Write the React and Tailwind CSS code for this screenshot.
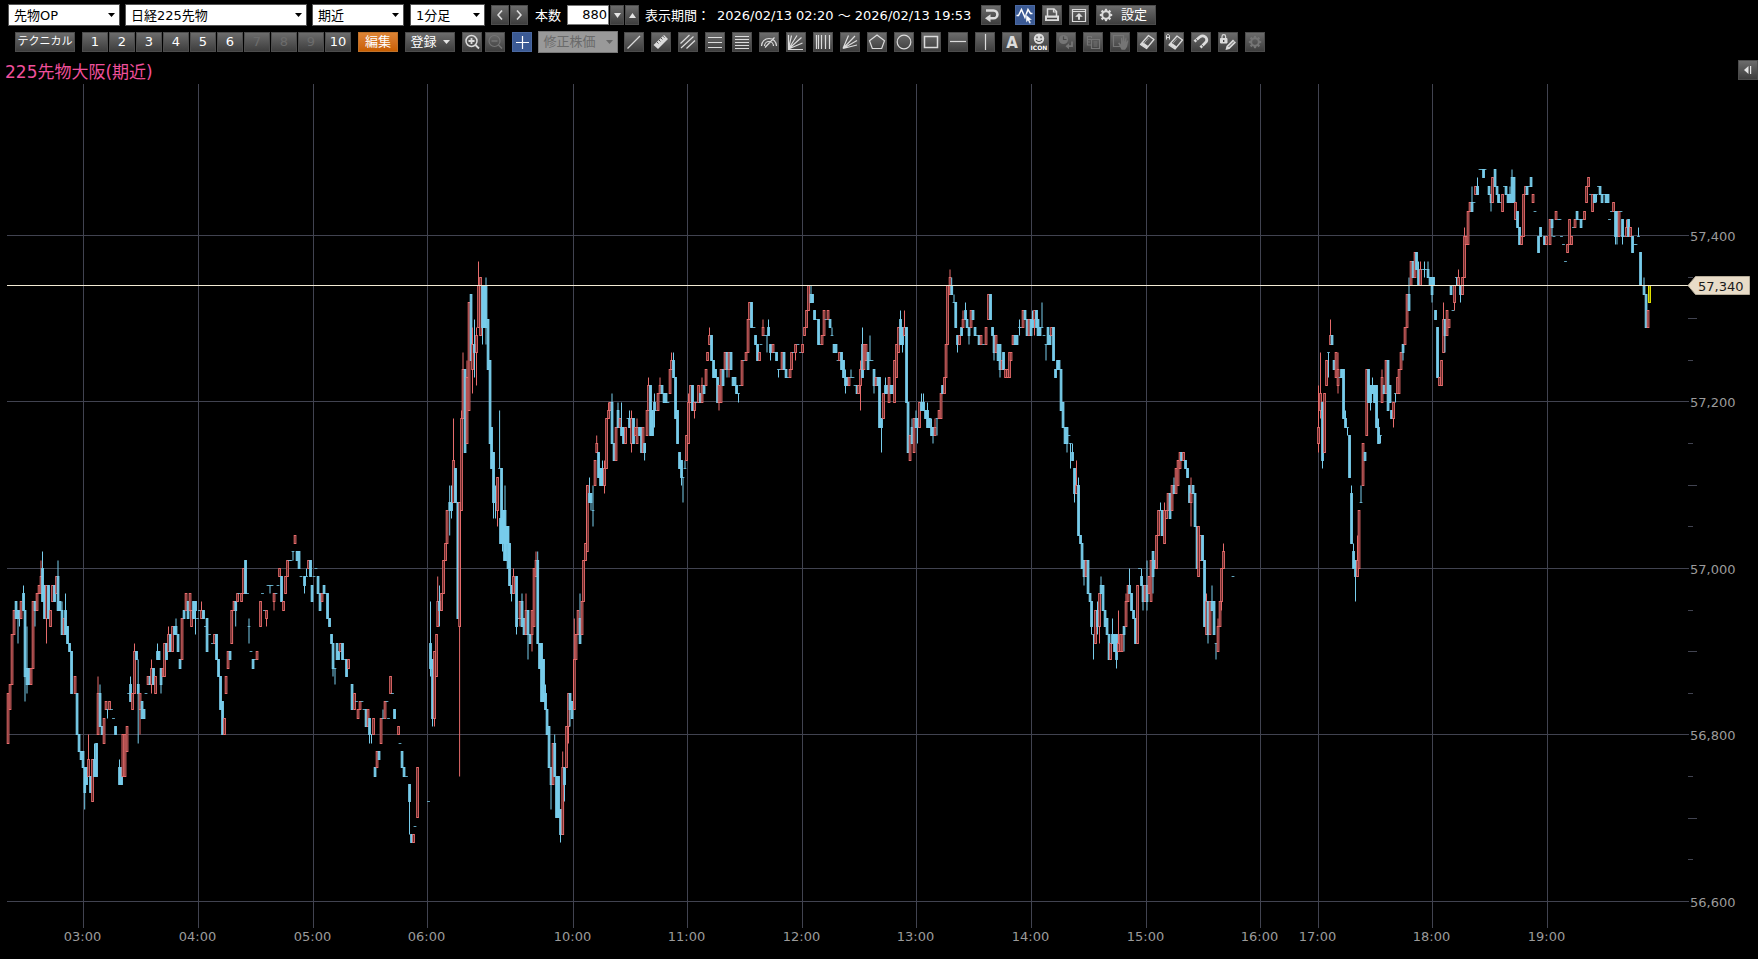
import React from "react";

/* Candles: "x open close [hN] [lN]"; prices are steps of 10 yen relative to 57,000. */
const CANDLES = `
8 -21 -15,10 -17 -14,12 -14 -8,14 -8 -5,16 -4 -6,18 -5 -6 l-9,19.5 -5 -6 l-7,21 -6 -4,23.5 -3 -5 h-2,25 -5 -13 l-16,27 -12 -14 h-7 l-15,29 -12 -14,31 -14 -12,33 -12 -4,35 -4 -5 l-7,37 -5 -3,39 -3 -2,41 -3 -1 h1,42.5 0 -4 h2,44.5 -2 -6,46.5 -6 -2 l-9,48.5 -2 -6,50.5 -7 -5,52.5 -4 -2,54.5 -2 -4,56.5 -3 -1,58 -1 -5 h1,60 -4 -5,62 -5 -8 h-4,64 -8 -6,65.5 -5 -8 h-3,67.5 -7 -9,69.5 -9 -10,71.5 -10 -15,75 -15 -13,77 -15 -20,79 -20 -22,81 -22 -23,83 -22 -24,84.7 -24 -27 l-29,86.5 -24 -26,88.5 -25 -23 h-20,90.5 -25 -27,92.5 -28 -23,94.5 -23 -25 h-21,96.5 -21 -25,98 -20 -15 h-13,100 -15 -19 h-14,102 -19 -20,104 -21 -18,106 -17 -16,107.5 -17 -17 l-18,109.5 -17 -16,111.5 -17 -17,113.5 -18 -18,115.5 -19 -20,119.5 -24 -26 h-23,121.5 -24 -26,122.8 -25 -20,125 -25 -20,127 -22 -19,128.7 -15 -15,130.5 -14 -16 h-13,132.5 -17 -15,134.5 -15 -10 h-9,136.5 -10 -11,138.2 -14 -15 h-11 l-21,140 -17 -15 l-20,142 -16 -18,144 -17 -18,146 -15 -15,148 -14 -13,150 -13 -14,151.5 -14 -12 h-11 l-15,153.5 -12 -14,155.5 -15 -13,157.5 -10 -11 h-9,159 -10 -11,161 -12 -14 l-15,163 -13 -12,164.5 -13 -9,166.5 -9 -11,168.5 -10 -8 h-7,170.5 -8 -10,172.5 -10 -7,174.5 -7 -8,176 -7 -8 h-6,178 -8 -10,180 -11 -12,182 -11 -6,184 -5 -6,186 -5 -3,188 -4 -6,190 -5 -3,191.5 -7 -5,193.5 -4 -6,195.5 -4 -5 l-8,197.5 -6 -6,199.5 -5 -5,201.5 -6 -5 h-4,203.5 -5 -6,205.5 -7 -7,207 -6 -10,209.5 -8 -8,212.5 -9 -9,214.5 -9 -8,216.5 -8 -11,218.5 -11 -13,220.5 -13 -17,222.5 -16 -20,224.5 -20 -18,226 -15 -13,228 -12 -10,230 -10 -11,231.7 -9 -5,234 -5 -4,235.7 -4 -5 l-7,237.5 -4 -3,239 -3 -3,241.5 -4 -3,243.5 -3 0,245.5 1 -3,247.5 -3 -3,249 -7 -7 h-6 l-9,251 -10 -10,253 -11 -12,255 -11 -11,257 -11 -10,260.5 -7 -4,262.5 -3 -3,264.5 -5 -5,266.5 -6 -5 l-7,268 -2 -2,270 -2 -2 l-3,272 -2 -2,274 -4 -3 l-5,276 -3 -3,278 -2 -2,279.5 -1 0,281.5 -1 -4,283.5 -5 -4,285.5 -3 -1,287.5 -1 1,289.5 1 1,291 1 1,293 2 2 l1,295 3 4,297 2 1,299 2 0,301 -1 -1,304.5 -1 -2 l-3,306.5 -1 -1 h0,308.5 0 1,310.5 1 -1,312 -2 -4,314 -1 -1,316 0 0,318 -1 -3,320 -3 -5,322 -4 -3,324 -2 -3,326 -3 -3,327.5 -3 -6,329.5 -6 -7,331.5 -8 -9,333 -9 -12 l-13,335 -12 -12 l-14,337 -9 -11,338.5 -10 -11,340.5 -10 -9,342.5 -9 -11,344.5 -11 -11,346.5 -11 -13,348.5 -12 -11,352 -14 -17,354.5 -17 -15,356.5 -16 -16,358 -18 -17,360 -17 -16,362 -16 -16,364 -17 -17,366 -17 -19,368 -19 -17,369.5 -18 -20 l-21,371.5 -20 -20 l-21,373.5 -20 -18,375 -24 -25,377 -24 -22,379 -22 -23,381 -21 -18,383 -18 -18 h-17,385 -18 -16,387 -16 -16,388.5 -18 -18,390.5 -15 -13,392.5 -15 -15,394.5 -17 -18,398.5 -20 -19,400 -21 -21,402 -22 -24,404 -24 -25,406.5 -25 -25,409.5 -26 -28 l-32,411.5 -32 -33,413.5 -33 -32,415 -31 -31,417.5 -30 -24,428.5 -28 -28,
430.5 -9 -12 h-4 l-13,432.5 -11 -18 l-19,434.5 -18 -10 l-19,436.5 -13 -8,437.7 -7 -4 h-1,439.5 -4 -5 h-2 l-7,441.5 -5 -3,443.5 -3 1,445.5 1 3,447 3 7,449.7 8 7 h10 l4,451.5 8 7 h10 l6,453.5 8 13 h18,455.5 12 8,457.8 8 -6,459.6 -7 8 l-25,461.5 7 18 h19,463 18 24 h26,465 24 14,467 15 23 h25,469 19 32,471 33 25,472.5 24 27 h29 l21,474.5 27 26 h30 l23,476.5 26 28 h29 l22,478.5 29 34 h37,480.5 28 35,482.5 34 29 l27,484.5 34 29,486 34 29 h35 l27,488 30 24,490 25 15,491.5 17 12,493.5 14 8 l6,495.5 8 8 h10 l6,497.5 7 11 l5,499.6 12 12 h19,501.5 12 3,503.5 7 3,505 7 3 h10,507.5 5 3,500.5 6 3,502.5 6 3 l2,504.5 5 1,506 5 1 h5,508 5 0 h5 l0,509.5 3 -2,511.5 -2 -3 l-4,513.5 -3 -1 h0,516.5 -1 -7 l-8,518.5 -6 -6,520 -6 -4 l-7,522 -4 -7 h-3,524 -6 -8,526 -8 -5 h-3,528 -5 -8 l-11,530 -8 -9,532 -8 -5 l-10,534 -7 0,536 -1 1 h2,537.7 1 -9 h2,539.5 -9 -12,541.5 -9 -16,543.5 -11 -16,545.5 -15 -17 h-14,547 -17 -20,549 -19 -24,551 -24 -26 l-29,553 -26 -21,554.7 -21 -25 h-20,556.5 -25 -30,558.5 -25 -30,560.5 -29 -32 l-33,562.7 -32 -24 h-22,564.5 -24 -26 l-28,566.5 -24 -19,568.5 -19 -15 l-21,570 -15 -17 l-19,572 -16 -18,574.3 -17 -11 h-6,576 -11 -8,578 -8 -5,580 -6 -9 h-3,582 -8 -4,583.5 -4 1,585.5 1 3,587.3 2 10,589.5 9 8 h11,591 9 8 l7,593 7 7 h10 l5,595 10 13,596.7 14 15 h16,598.5 14 11,600.5 12 10,602.5 12 10 h13,604.5 10 12 h13 l9,606.5 12 18,608.5 18 19 h20,610 19 20,612 20 15 h21,614 15 13,616 13 17,618 19 17 h20,620 17 18,621.5 17 16 h20,623.5 17 15,625.5 15 17,628 18 18,629.5 18 17 h19,631.5 15 18 h19 l14,633.5 18 15,635.5 16 17,637 15 17 h18,639.5 17 16,641.5 17 14,643 14 17,644.6 15 14 l13,647 16 19,648.5 19 22 h23,650.5 22 16,652.5 19 16,654.5 20 19 h21 l17,656.5 19 19,658 19 21,660 21 22 h23,662 22 21,664 21 20,666 21 20,668 20 20,670 21 24,671.5 24 25 h26,673.5 25 23 h26,675.5 23 18,677.5 19 15,679.5 14 12,681.5 13 11 l10,683 11 11 l8,685 12 12 h13,686.5 13 16,688.5 15 20 h21,690.5 20 22,692.5 22 19,694.5 19 20 l18,696.5 20 20,698.5 20 22,700.5 21 20,702 20 22 h23,704 22 21,706 22 24,707.5 25 26,709.5 27 28 h29,711.5 28 25,713.5 25 23,715.5 24 23,717.5 23 20,719 20 22 l19,721 20 24,723 24 22,725 24 26,727 26 24 l23,729 24 26 l23,731 26 24,733 23 22,735 23 22,736.5 22 21,738.5 21 21 l20,740 22 22,742 22 25,744 25 25,746 25 26,748 26 30,749.5 30 32,751.5 32 29,754 29 29,755.5 28 27,757.5 27 25,759.5 25 26,761 27 27,763 28 29 h30,765 28 28,767 28 28 l26,768.5 29 28 h30,770.5 27 26 l25,773 26 27,774.5 26 26,776.5 26 25,778.5 24 24 l23,780.5 24 24,782 24 26,784 26 24,786 24 23,788 23 23,790 23 24,791.5 24 26,793.5 26 26,795.5 26 27 l25,798 27 27,800.5 26 26,802.5 26 27,804.5 28 29,806.5 29 31,808.5 31 34,811 33 32 h34,812.5 33 32,814.5 31 30,816.5 30 30,818.5 30 27,820.5 27 27,822 27 28,824 28 31,826 30 30,828 30 31,830 30 29,832 28 28 h29,834 27 26,836 27 26,838 25 25,839.5 25 26,841.5 26 24,843.5 25 23,845.5 23 22 h24 l21,847.5 23 22,849 22 23,851 23 23 h24,853 23 23,855 22 22,857 22 21,858.5 21 22,860.5 22 24 h25 l19,862.5 27 23 h29,864 24 27,866 25 27,868 26 24,870 25 25 h28,872 25 25,874 24 22 l21,876 22 23,878 23 22,879.5 23 17,881.5 18 17 l14,883.5 18 21,885.5 22 21 h23,887.5 22 21,889 20 23,891 22 21,893 22 21,894.5 20 25,896.5 23 27,898.5 26 29,900.5 30 27 h31,902.5 29 27 l26,904.5 28 29 h31,906.5 29 20,908 20 14,910 13 16,912 17 15 h18,914 14 18,916 18 17 h19,917.5 18 17 l15,919.5 17 20,921.5 20 19 h21,923.5 20 19 h21,925.5 19 18,927.5 19 17 h20,929.5 18 17,931.5 17 16 h18,933 17 16 l15,935 16 17 h18,937 18 18 l16,939 18 19,941 18 21,942.5 22 21,944.5 21 23,946 23 27,947.5 27 34,950 33 35 h36,951.7 34 33 h35,954 32 32 h33,955.7 32 29,957.5 28 27 l26,959.5 27 28,961.5 29 28,963 29 30 h31,965.5 31 30 h32,967 30 29,969 29 28 l27,971 29 31,973 31 30,975 29 28,977 28 28,979 28 27,981 27 28,983.5 27 27,986 27 29,988.5 30 33,990.5 33 30,992.5 29 28,994 28 26 l25,996 26 28,998 27 25,1000 27 24 l23,1002 24 25,1003.5 26 24,1005.5 23 24,1007.5 23 24,1009.5 23 26,1011 25 26,1013 27 28,1015 28 27,1017 28 27,1019.5 29 29 h30 l28,1021.5 29 29,1023 29 31,1025 31 30,1027 30 28,1029 28 30,1031 30 28,1032.5 30 29 h31,1034.5 30 31 l28,1036.5 31 29,1038 30 28,1040 29 28,1042 29 29 h32,1044 28 28,1046 27 27 l25,1048 29 27,1050 28 27,1051.5 28 29,1053.5 29 25,1055.5 24 23,1057.5 25 24,1059 25 24,1061 24 19,1063 20 17,1065 17 15,1067 17 15 l14,1069 16 16,1070.5 15 15 l12,1072.5 14 13 h15,1074.5 12 9 l8,1076.5 9 10 h13,1078.5 10 4 h11,
1080.5 4 3,1082 3 0,1084 1 -1 l-2,1086 -1 1,1088 1 -3,1090 -3 -4,1091.5 -4 -7 l-8,1093.5 -8 -8 l-11,1095.5 -9 -5,1097.5 -5 -7 h-4 l-8,1099.5 -7 -3 l-9,1101 -2 -3 h-1,1103 -2 -5,1105 -5 -7,1107 -6 -8,1109 -8 -11,1110.5 -11 -9,1112.5 -8 -9 h-6,1114.5 -8 -10,1116.5 -8 -11 l-12,1118.5 -10 -9 h-5,1120.5 -10 -8,1122 -10 -8,1124 -7 -8 l-10,1126 -7 -4 h-3,1128 -4 -2,1129.5 -2 -3 h0,1131.5 -3 -5,1133.5 -5 -6,1135.5 -6 -9,1137.5 -9 -2,1139.5 0 0,1141.5 -1 -2 h0,1143 -2 -4 l-5,1145 -4 -2,1147 -2 -4 h1 l-5,1149 -3 -1,1151 -4 1,1153 2 -1 l-3,1155 1 0,1156.5 0 4,1158.5 4 7,1160.5 7 7 h8,1162 7 4,1164.5 3 7 h8,1166.5 6 7,1168 7 9,1170 9 6,1172 7 10,1174 10 9 h11,1176 9 12,1178 10 13,1180 12 14,1181.5 14 13,1183.5 13 14,1185.5 13 12,1187.5 12 11,1189.5 10 8,1191 8 9 h11 l5,1193 10 9,1195 9 5,1197 5 0,1198.5 -1 5,1200.5 1 4,1202.5 4 1,1204.5 1 -7,1206.5 -8 -4 h-3,1208 -4 -8 l-9,1210 -8 -4,1212 -4 -5 h-2,1214 -4 -8,1216 -9 -9 l-11,1218 -10 -7 h-6,1220 -7 -4,1221.5 -4 0 l-5,1223.5 0 2 h3,1233 -1 -1,
1318.5 15 17 h22 l14,1320.5 19 21 h26 l18,1322.5 20 13 l12,1324.5 14 21,1326.5 22 25,1328.5 26 26 l23,1330.5 27 28 h30,1332 28 27,1334 25 24,1336 23 26,1338 22 24 h26 l21,1340 23 23,1341.5 24 23,1343.5 24 18,1345.5 18 17 h19,1347.5 17 17 l16,1349.5 16 11,1351.5 9 3 h10,1353.5 2 0 h3,1355.5 1 -1 l-4,1357.5 -1 1 h4,1359 0 7,1361 8 8 h10,1363 10 15,1365 14 13,1366.7 16 24,1368.5 24 20,1370.5 22 20 l19,1372.5 22 21 h23,1374.5 22 20,1376.5 22 17,1378.5 17 15 h18,1380.5 16 16 l15,1382 20 23 h24,1384 22 21,1386 21 25,1388 25 19,1390 22 20,1391.5 19 18,1393.5 18 20 l17,1395.5 21 21 l20,1397.5 21 23,1399 21 24,1401 24 26,1403 27 26 l25,1405 27 29,1407 29 33,1409 33 31 h35,1411 34 37,1413 37 35,1415 35 38,1416.5 38 36,1418.5 36 34 h37,1420.5 34 36 h37,1422.5 36 36,1424.5 36 36 h37 l35,1426.5 36 36,1428 36 35 h37,1430 35 34,1432 35 33 l32,1433.5 35 34,1435.5 31 30,1437.5 29 23,1439.5 22 23,1441.5 22 25,1443.5 26 30 h32,1445 30 28 l26,1447 28 31,1449 29 30,1451 34 33,1453 31 31,1454.5 32 34 l31,1456.5 35 35 l34,1458.5 34 35 h36,1460.5 34 33 l32,1462.5 33 35,1464.5 35 40 h41,1466 39 40,1468 39 43,1470 43 44,1472 44 43 h46,1474 44 44,1475.5 45 46,1477.5 46 45 h47,1480 48 48,1482 48 48,1483.5 48 47,1485 48 48,1489 46 45,1491 45 44 l43,1492.5 44 47,1495 48 46,1497 46 45,1498.5 45 44,1500.5 44 44,1502.5 43 45,1504.5 46 46,1506 46 45,1508 45 44,1510 45 44 h46,1512 47 44 h48,1514 47 44,1515.5 42 44,1517.5 43 41,1519.5 41 39,1521.5 39 40,1523.5 40 45,1525.5 45 46,1527 46 45,1529 46 46,1531 47 46,1533 44 45,1535 43 43,1538.5 40 38,1540.5 41 40,1544.5 40 39,1546.5 39 40,1550 39 42,1552 42 41 l40,1554 40 40,1556 42 43,1558.5 42 42,1560 42 42,1561.5 40 40,1563.5 39 39,1565.5 37 37,1567.5 38 39,1569.5 39 42,1571.5 39 40,1573.5 41 41,1575 41 42,1577 43 42,1579 42 42,1581 42 41,1583 42 42,1584.5 42 43,1586.5 44 46,1588.5 46 47,1590.5 45 45,1592.5 43 45,1594.5 45 44,1596.5 45 45 l44,1598.5 46 46,1600 46 45,1602 45 44,1604 45 45,1606 45 44,1608 45 44,1609.5 42 42,1611.5 43 43,1613.5 43 44,1615.5 43 40 l39,1617 43 40 l39,1619 40 43,1621 43 43,1622.5 42 40 l39,1625 40 40,1626.5 40 41 h42,1628.5 42 40,1630.5 40 41,1632.5 40 38,1634.5 39 39,1636 39 39,1638.5 40 40 h41,1640.5 38 34,1644 34 33 h35,1646 33 29,1648 29 31
`
  .trim()
  .split(",")
  .map((row) => {
    const [x, o, c, ...rest] = row.trim().split(/\s+/);
    const candle = { x: +x, o: +o, c: +c };
    candle.h = Math.max(candle.o, candle.c);
    candle.l = Math.min(candle.o, candle.c);
    rest.forEach((t) => (candle[t[0]] = +t.slice(1)));
    return candle;
  });

const HOURS = [
  [83.5, "03:00"], [198.5, "04:00"], [313.5, "05:00"], [427.5, "06:00"], [573.5, "10:00"],
  [687.5, "11:00"], [802.5, "12:00"], [916.5, "13:00"], [1031.5, "14:00"], [1146.5, "15:00"],
  [1260.5, "16:00"], [1318.5, "17:00"], [1432.5, "18:00"], [1547.5, "19:00"],
];
const PRICES = [[235.5, "57,400"], [401.5, "57,200"], [568.5, "57,000"], [734.5, "56,800"], [901.5, "56,600"]];
const TICKS = [277.5, 318.5, 360.5, 443.5, 485.5, 526.5, 610.5, 651.5, 693.5, 776.5, 818.5, 859.5];
const LONG_TICKS = [318.5, 485.5, 651.5, 818.5];

const yOf = (level) => Math.round(568 - level * 8.31) + 0.5;

function Candle({ x, o, c, h, l }) {
  const top = yOf(Math.max(o, c));
  const bottom = yOf(Math.min(o, c));
  const up = c > o;
  const color = up ? "#e66b6b" : "#78cdec";
  return (
    <g stroke={color} strokeWidth="1">
      {h > Math.max(o, c) && <path d={`M${x} ${yOf(h)}V${top}`} />}
      {l < Math.min(o, c) && <path d={`M${x} ${bottom}V${yOf(l)}`} />}
      {o === c ? (
        <path d={`M${x - 1.4} ${top}h2.8`} opacity="0.8" />
      ) : (
        <rect x={x - 0.8} y={top} width="1.7" height={bottom - top} fill={up ? "#3a1616" : color} />
      )}
    </g>
  );
}

function Chart() {
  return (
    <svg viewBox="0 84 1758 875" className="block h-auto w-full" role="img" aria-label="225先物大阪(期近) 1分足">
      <g stroke="#414350" fill="none">
        {HOURS.map(([x]) => <path key={x} d={`M${x} 84V928`} />)}
        {PRICES.map(([y]) => <path key={y} d={`M7 ${y}H1689`} />)}
        {TICKS.map((y) => <path key={y} d={`M1688 ${y}h${LONG_TICKS.includes(y) ? 9 : 5}`} />)}
      </g>
      {CANDLES.map((c) => <Candle key={c.x} {...c} />)}
      <rect x="1648.5" y={yOf(34)} width="2" height={yOf(32) - yOf(34)} fill="#8a8a00" stroke="#e0e000" />
      <path d="M7 285.5H1690" stroke="#f2ead4" />
      <path d="M1688 285.5L1695.5 276.5H1749.5V294.5H1695.5Z" fill="#e8dcc8" stroke="#b5ab98" />
      <g className="text-[13px]" fill="#9b9b9b">
        {HOURS.map(([x, t]) => <text key={t} x={x - 1} y="941" textAnchor="middle">{t}</text>)}
        {PRICES.map(([y, t]) => <text key={t} x="1690" y={y + 5.5}>{t}</text>)}
        <text x="1698" y="291" fill="#1a1a1a">57,340</text>
      </g>
    </svg>
  );
}

/* Every button look carries its own face, border and text colour. */
const LOOKS = {
  normal: "h-5 border-[#4c4c4c] bg-linear-to-b from-[#6c6c6c] to-[#3e3e3e] text-white disabled:text-[#6c6c6c]",
  active: "h-5 border-[#4a68a0] bg-[#3b5a94] text-white",
  edit: "h-5 border-[#c0722a] bg-linear-to-b from-[#dd8434] to-[#c95f00] text-white",
  flat: "h-[22px] border-[#777] bg-[#999] text-[#6a6a6a]",
};

function Btn({ className = "w-5", look = "normal", label, children, ...rest }) {
  return (
    <button type="button" aria-label={label} className={`flex shrink-0 items-center justify-center border ${LOOKS[look]} ${className}`} {...rest}>
      {children}
    </button>
  );
}

function Drop({ label, value, className }) {
  return (
    <div className={`relative h-[22px] shrink-0 ${className}`}>
      <select aria-label={label} defaultValue={value} className="h-full w-full appearance-none border border-[#555] bg-white pl-[5px] text-[13px] leading-none text-black">
        <option>{value}</option>
      </select>
      <svg viewBox="0 0 7 4" className="pointer-events-none absolute right-[5px] top-[9px] h-1 w-[7px]"><path d="M0 0h7L3.5 4z" fill="#000" /></svg>
    </div>
  );
}

function Icon({ children, dim }) {
  return (
    <svg viewBox="0 0 20 20" className="-m-px h-5 w-5 shrink-0" fill="none" stroke={dim ? "#757575" : "#dcdcdc"} strokeWidth="1.2">
      {children}
    </svg>
  );
}

function Gear({ dim }) {
  return (
    <Icon dim={dim}>
      <circle cx="10" cy="10" r="3.8" strokeWidth="2" />
      <g strokeWidth="2.2">
        {[0, 45, 90, 135, 180, 225, 270, 315].map((a) => <path key={a} d="M10 3.8V6" transform={`rotate(${a} 10 10)`} />)}
      </g>
    </Icon>
  );
}

const eraser = (
  <>
    <path d="M11.5 3.5L17 7.500 9.500 16.500 3.500 12.500Z" strokeWidth="1.300" strokeLinejoin="round" />
    <path d="M3.800 12.300l5.700 4 1.800-2.200-5.600-4z" fill="#dcdcdc" stroke="none" />
    <path d="M11.500 6l-4.500 5.300" stroke="#a0a0a0" strokeWidth="1" />
  </>
);

const TOOLS = [
  ["直線", <path d="M3.5 16.5L16 4" />],
  ["目盛", <><path d="M2.5 13L13 3l4 4L7 17z" fill="#dcdcdc" stroke="none" /><path d="M6 10l1.500 1.500M8 8l1.500 1.500M10 6l1.500 1.500M12 4.200l1.500 1.500" stroke="#555" strokeWidth="1" /></>],
  ["平行線", <path d="M2.5 11.5L11.5 3M3 16L15.5 4.5M8.5 16.5L17 8.5" />],
  ["三本線", <path d="M3 5.5h14M3 10.5h14M3 15.5h14" />],
  ["五本線", <path d="M3 4.5h14M3 7.5h14M3 10.5h14M3 13.5h14M3 16.5h14" />],
  ["円弧", <path d="M2.5 14a7.5 7.5 0 0 1 15 0M5.5 14a4.500 4.500 0 0 1 9 0M6 15.500L15.500 5.500" />],
  ["ファン", <path d="M2.5 3v14.5H17M2.5 17L5.5 3.5M2.5 17L11 3.5M2.5 17L15.5 5.5M2.5 17L16.5 11" />],
  ["縦線群", <path d="M3.5 3v14M5.5 3v14M8.5 3v14M12.5 3v14M16.5 3v14" />],
  ["スピードライン", <path d="M3 16.5L8.5 3.5M3 16.5L15 4M3 16.5L17 8.5M3 16.5L17 13" />],
  ["五角形", <path d="M10 3L17.5 8.8 14.7 16.5H5.3L2.5 8.8Z" />],
  ["円", <circle cx="10" cy="10" r="6.8" />],
  ["四角形", <path d="M3.5 4.5h13v11h-13z" strokeWidth="1.5" />],
  ["水平線", <path d="M2 9.5h16" />],
  ["垂直線", <path d="M10.5 2v16" />],
  ["文字", <text x="10" y="15.5" textAnchor="middle" fontSize="15" fontWeight="700" fill="#dcdcdc" stroke="none">A</text>],
  ["アイコン", <><circle cx="10" cy="6.7" r="5.2" fill="#dcdcdc" stroke="none" /><path d="M8 4.5v1.8M12 4.5v1.8M7 8c1.5 2 4.5 2 6 0" stroke="#444" /><text x="10" y="18" textAnchor="middle" fontSize="6" fontWeight="700" fill="#fff" stroke="none">ICON</text></>],
  ["履歴", <><circle cx="7.5" cy="7.5" r="4.6" fill="#757575" stroke="none" /><path d="M7.5 4.5v3h3" stroke="#4a4a4a" /><path d="M16 9.5v4.7h-4" strokeWidth="1.8" /><path d="M9.5 14.2l3.5-3v6z" fill="#757575" stroke="none" /></>, true],
  ["複製", <><path d="M8.5 6V4.500H4.500v8.500H8" /><path d="M8.500 7.500h8v9h-8zM10.500 10h4M10.500 12h4M10.500 14h4M5 7.500h3M5 10h2" /></>, true],
  ["移動", <><path d="M10 14.500H3.500v-11h10V6" /><path d="M8 11l1.500-.5 1.500 2V6l1.200-.5.8 4V4.500h1.200l.5 5 .8-4 1 .3v4.500l1-2 .8.500-1.200 6-2 3h-3.500z" fill="#757575" stroke="none" /></>, true],
  ["消去", eraser],
  ["全消去", <><g transform="translate(1.500 .5)">{eraser}</g><path d="M2.500 7.500V3.500l1-1h1l1 1v4M2.500 5.500h3" strokeWidth="1" /></>],
  ["マグネット", <><path d="M3.500 9.500L9 4.800C11.500 3 14.500 4 15.500 6.500c.8 2-.2 3.500-1.500 4.500l-4.500 4.500" strokeWidth="2.800" /><path d="M4.600 6.600l2 2.500M10.500 12.500l2 2.500" stroke="#555" strokeWidth="1" /></>],
  ["描画ロック", <><path d="M2.500 6.500h6.500v4.500H2.500z" fill="#dcdcdc" strokeWidth="1" /><path d="M4 6V4.500a1.800 1.800 0 0 1 3.600 0V6" /><path d="M5.700 8v2" stroke="#333" /><path d="M7.500 18l1-4 6.500-6.500 3 3-6.500 6.500z" fill="#dcdcdc" stroke="none" /><path d="M10.500 15l5.500-5.500" stroke="#555" strokeWidth="1" /></>],
  ["描画設定", null, true],
];

export default function App() {
  return (
    <div className="min-h-screen overflow-hidden bg-black font-['DejaVu_Sans','Noto_Sans_CJK_JP',sans-serif] text-[13px] leading-5 text-white">
      <header>
        <div className="flex h-[30px] items-center whitespace-nowrap pl-2">
          <Drop label="種別" value="先物OP" className="w-28" />
          <Drop label="銘柄" value="日経225先物" className="ml-[5px] w-[182px]" />
          <Drop label="限月" value="期近" className="ml-[5px] w-[92px]" />
          <Drop label="足種" value="1分足" className="ml-1.5 w-[75px]" />
          <Btn label="前へ" className="ml-1.5 w-[18px]"><svg viewBox="0 0 6 10" className="h-2.5 w-1.5" fill="none" stroke="#ddd" strokeWidth="1.6"><path d="M5 .5L1 5l4 4.500" /></svg></Btn>
          <Btn label="次へ" className="ml-px w-[18px]"><svg viewBox="0 0 6 10" className="h-2.5 w-1.5" fill="none" stroke="#ddd" strokeWidth="1.6"><path d="M1 .5L5 5 1 9.500" /></svg></Btn>
          <label htmlFor="bars" className="ml-[7px] shrink-0 pt-0.5">本数</label>
          <input id="bars" type="text" defaultValue="880" className="ml-1.5 h-5 w-[42px] shrink-0 border border-[#777] bg-white pr-px text-right text-[13px] text-black" />
          <Btn label="減らす" className="ml-px w-3.5"><svg viewBox="0 0 7 5" className="h-[5px] w-[7px]"><path d="M0 0h7L3.5 5z" fill="#e5e5e5" /></svg></Btn>
          <Btn label="増やす" className="ml-px w-3.5"><svg viewBox="0 0 7 5" className="h-[5px] w-[7px]"><path d="M0 5h7L3.5 0z" fill="#e5e5e5" /></svg></Btn>
          <span className="ml-1.5 w-[72px] shrink-0 pt-0.5">表示期間：</span>
          <span className="w-[264px] shrink-0 pt-0.5">2026/02/13 02:20 ～ 2026/02/13 19:53</span>
          <Btn label="戻す"><Icon><path d="M5 5.500h7.500a3.500 3.500 0 0 1 0 7.800H9" strokeWidth="2.600" /><path d="M4 13.300l5.500-4v8z" fill="#dcdcdc" stroke="none" /></Icon></Btn>
          <Btn label="トレース" look="active" className="ml-3.5 w-5">
            <Icon><path d="M1.500 10.500h2L6.500 4.500l3.500 8 3-8 2.500 4h2" stroke="#fff" strokeWidth="1.500" /><path d="M11 9.500v8l2-1.800 1.500 3 1.500-.8-1.300-2.800h2.500z" fill="#fff" stroke="#3b5a94" strokeWidth=".4" /></Icon>
          </Btn>
          <Btn label="印刷" className="ml-[7px] w-5">
            <Icon><path d="M5.500 11V4h6.500l2.500 2.500V11" strokeWidth="1.500" /><path d="M11.500 4v3h3" /><path d="M3 10.500h14v5.500H3z" fill="#dcdcdc" stroke="none" /><path d="M5 13.500h10" stroke="#444" strokeWidth="1.500" /></Icon>
          </Btn>
          <Btn label="別画面" className="ml-[7px] w-5">
            <Icon><path d="M3.500 4.500h13v12h-13zM3.500 6.500h13" /><path d="M10 8l3.800 3.800H11v3H9v-3H6.200z" fill="#dcdcdc" stroke="none" /></Icon>
          </Btn>
          <Btn className="ml-[7px] w-[60px] pr-2"><Gear /><span className="ml-1.5">設定</span></Btn>
        </div>

        <div className="flex h-6 items-center whitespace-nowrap pl-[15px]">
          <Btn className="w-[60px] text-[11px]">テクニカル</Btn>
          <div className="ml-[7px] flex gap-px">
            {["1", "2", "3", "4", "5", "6", "7", "8", "9", "10"].map((n) => (
              <Btn key={n} className="w-[26px]" disabled={n === "7" || n === "8" || n === "9"}>{n}</Btn>
            ))}
          </div>
          <Btn look="edit" className="ml-[7px] w-10">編集</Btn>
          <Btn className="ml-[7px] w-[50px]">登録<svg viewBox="0 0 7 4" className="ml-1.5 h-1 w-[7px]"><path d="M0 0h7L3.500 4z" fill="#e5e5e5" /></svg></Btn>
          <Btn label="拡大" className="ml-[7px] w-5"><Icon><circle cx="9.500" cy="9" r="5.500" strokeWidth="1.500" /><path d="M6.500 9h6M9.500 6v6M13.500 13l3.500 3.500" strokeWidth="1.800" /></Icon></Btn>
          <Btn label="縮小" className="ml-[3px] w-5" disabled><Icon dim><circle cx="9.500" cy="9" r="5.500" /><path d="M6.500 9h6M13.500 13l3.500 3.500" strokeWidth="1.500" /></Icon></Btn>
          <Btn label="十字線" look="active" className="ml-[7px] w-5"><Icon><path d="M4 10.500h13M10.500 4v13" stroke="#fff" /></Icon></Btn>
          <Btn look="flat" className="ml-1.5 w-20" disabled>
            修正株価<svg viewBox="0 0 7 4" className="ml-2.5 h-1 w-[7px]"><path d="M0 0h7L3.500 4z" fill="#666" /></svg>
          </Btn>
          <div className="ml-1.5 flex gap-[7px]">
            {TOOLS.map(([name, art, dim]) => (
              <Btn key={name} label={name} disabled={!!dim}>{art ? <Icon dim={dim}>{art}</Icon> : <Gear dim />}</Btn>
            ))}
          </div>
        </div>
      </header>

      <main>
        <div className="flex h-[30px] items-start justify-between pl-[5px] pt-1.5">
          <h1 className="text-[17px] leading-6 text-[#f0509c]">225先物大阪(期近)</h1>
          <Btn label="パネルを開く"><svg viewBox="0 0 8 8" className="h-2 w-2"><path d="M4.500 0v8L0 4zM6 0h1.200v8H6z" fill="#e5e5e5" /></svg></Btn>
        </div>
        <Chart />
      </main>
    </div>
  );
}
